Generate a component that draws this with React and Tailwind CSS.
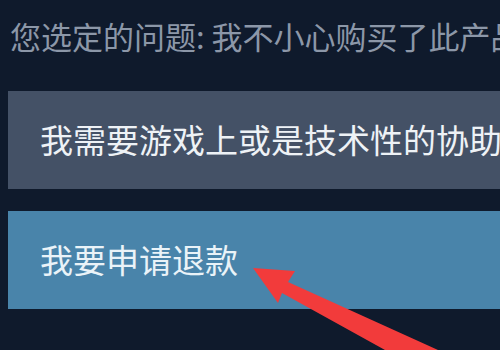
import React from 'react'

const font = { fontFamily: '"Noto Sans CJK SC", "Noto Sans", sans-serif' }

function Option({ label, className }) {
    return (
        <div className={`flex h-[98px] items-center whitespace-nowrap pl-8 text-[33px] ${className}`}>
            {label}
        </div>
    )
}

export default function App() {
    return (
        <div className="relative h-[350px] w-[500px] overflow-hidden bg-[#0f1a2c]" style={font}>
            <div className="h-[91px] whitespace-nowrap pl-[10px] pt-4 text-[31px] leading-[40px] text-[#8c97a8]">
                您选定的问题: 我不小心购买了此产品
            </div>
            <div className="ml-2 flex flex-col gap-[22px]">
                <Option label="我需要游戏上或是技术性的协助" className="bg-[#445166] text-[#eef2f6]" />
                <Option label="我要申请退款" className="bg-[#4984aa] text-[#eaf3f8]" />
            </div>

            {/* annotation arrow */}
            <svg className="pointer-events-none absolute inset-0" width="500" height="350" viewBox="0 0 500 350">
                <polygon
                    points="253,268 295,271 288,282 438,350 385,350 282,293 278,303"
                    fill="#f23b3b"
                />
            </svg>
        </div>
    )
}
